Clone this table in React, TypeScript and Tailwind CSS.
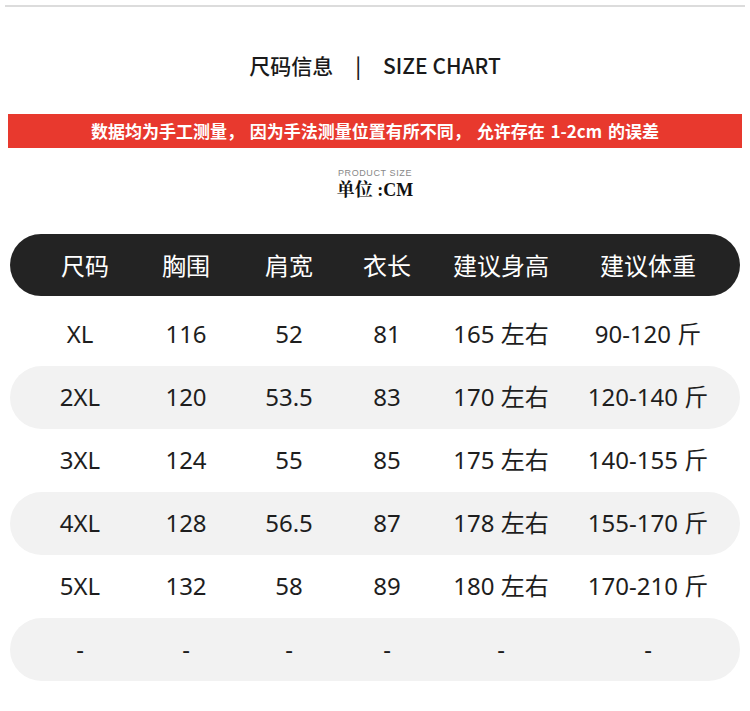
const cols = ["尺码", "胸围", "肩宽", "衣长", "建议身高", "建议体重"];

const rows = [
  ["XL", "116", "52", "81", "165 左右", "90-120 斤"],
  ["2XL", "120", "53.5", "83", "170 左右", "120-140 斤"],
  ["3XL", "124", "55", "85", "175 左右", "140-155 斤"],
  ["4XL", "128", "56.5", "87", "178 左右", "155-170 斤"],
  ["5XL", "132", "58", "89", "180 左右", "170-210 斤"],
  ["-", "-", "-", "-", "-", "-"],
];

const grid = "grid grid-cols-[140px_72px_134px_62px_166px_128px] items-center";

export default function App() {
  return (
    <div
      className="w-[750px] h-[711px] bg-white overflow-hidden pt-[5px]"
      style={{ fontFamily: '"Noto Sans", "Noto Sans CJK SC", sans-serif' }}
    >
      <div className="mx-[5px] h-[2px] bg-[#dcdcdc]" />

      <div className="mt-[45px] flex items-center justify-center text-[21px] leading-[26px] font-medium text-[#1a1a1a] font-['Noto_Sans_CJK_SC',sans-serif]">
        <span>尺码信息</span>
        <span className="mx-[22px]">|</span>
        <span>SIZE CHART</span>
      </div>

      <div className="mt-[36px] mx-[8px] h-[34px] bg-[#e8392e] flex items-center justify-center text-white text-[17px] font-bold font-['Noto_Sans_CJK_SC',sans-serif] [word-spacing:2px]">
        数据均为手工测量， 因为手法测量位置有所不同， 允许存在 1-2cm 的误差
      </div>

      <div className="mt-[20px] text-center text-[9px] leading-[10px] text-[#888] tracking-[0.6px] font-['Liberation_Sans',sans-serif]">
        PRODUCT SIZE
      </div>
      <div className="mt-[2px] text-center text-[18px] leading-[20px] font-bold text-[#111] font-['Liberation_Serif','Noto_Serif_CJK_SC','Noto_Sans_CJK_SC',serif]">
        单位 :CM
      </div>

      <div className="mt-[34px] mx-[10px] h-[62px] rounded-full bg-[#232323] text-white text-[24px] font-['Noto_Sans_CJK_SC',sans-serif]">
        <div className={`${grid} h-full`}>
          {cols.map((c, i) => (
            <div key={i} className={`text-center ${i === 0 ? "pl-[10px]" : ""}`}>
              {c}
            </div>
          ))}
        </div>
      </div>

      <div className="mt-[7px] mx-[10px]">
        {rows.map((r, ri) => (
          <div
            key={ri}
            className={`${grid} h-[63px] rounded-full text-[24px] text-[#1e1e1e] ${
              ri % 2 === 1 ? "bg-[#f2f2f2]" : ""
            }`}
          >
            {r.map((v, ci) => (
              <div key={ci} className="text-center pb-[2px]">
                {v}
              </div>
            ))}
          </div>
        ))}
      </div>
    </div>
  );
}
